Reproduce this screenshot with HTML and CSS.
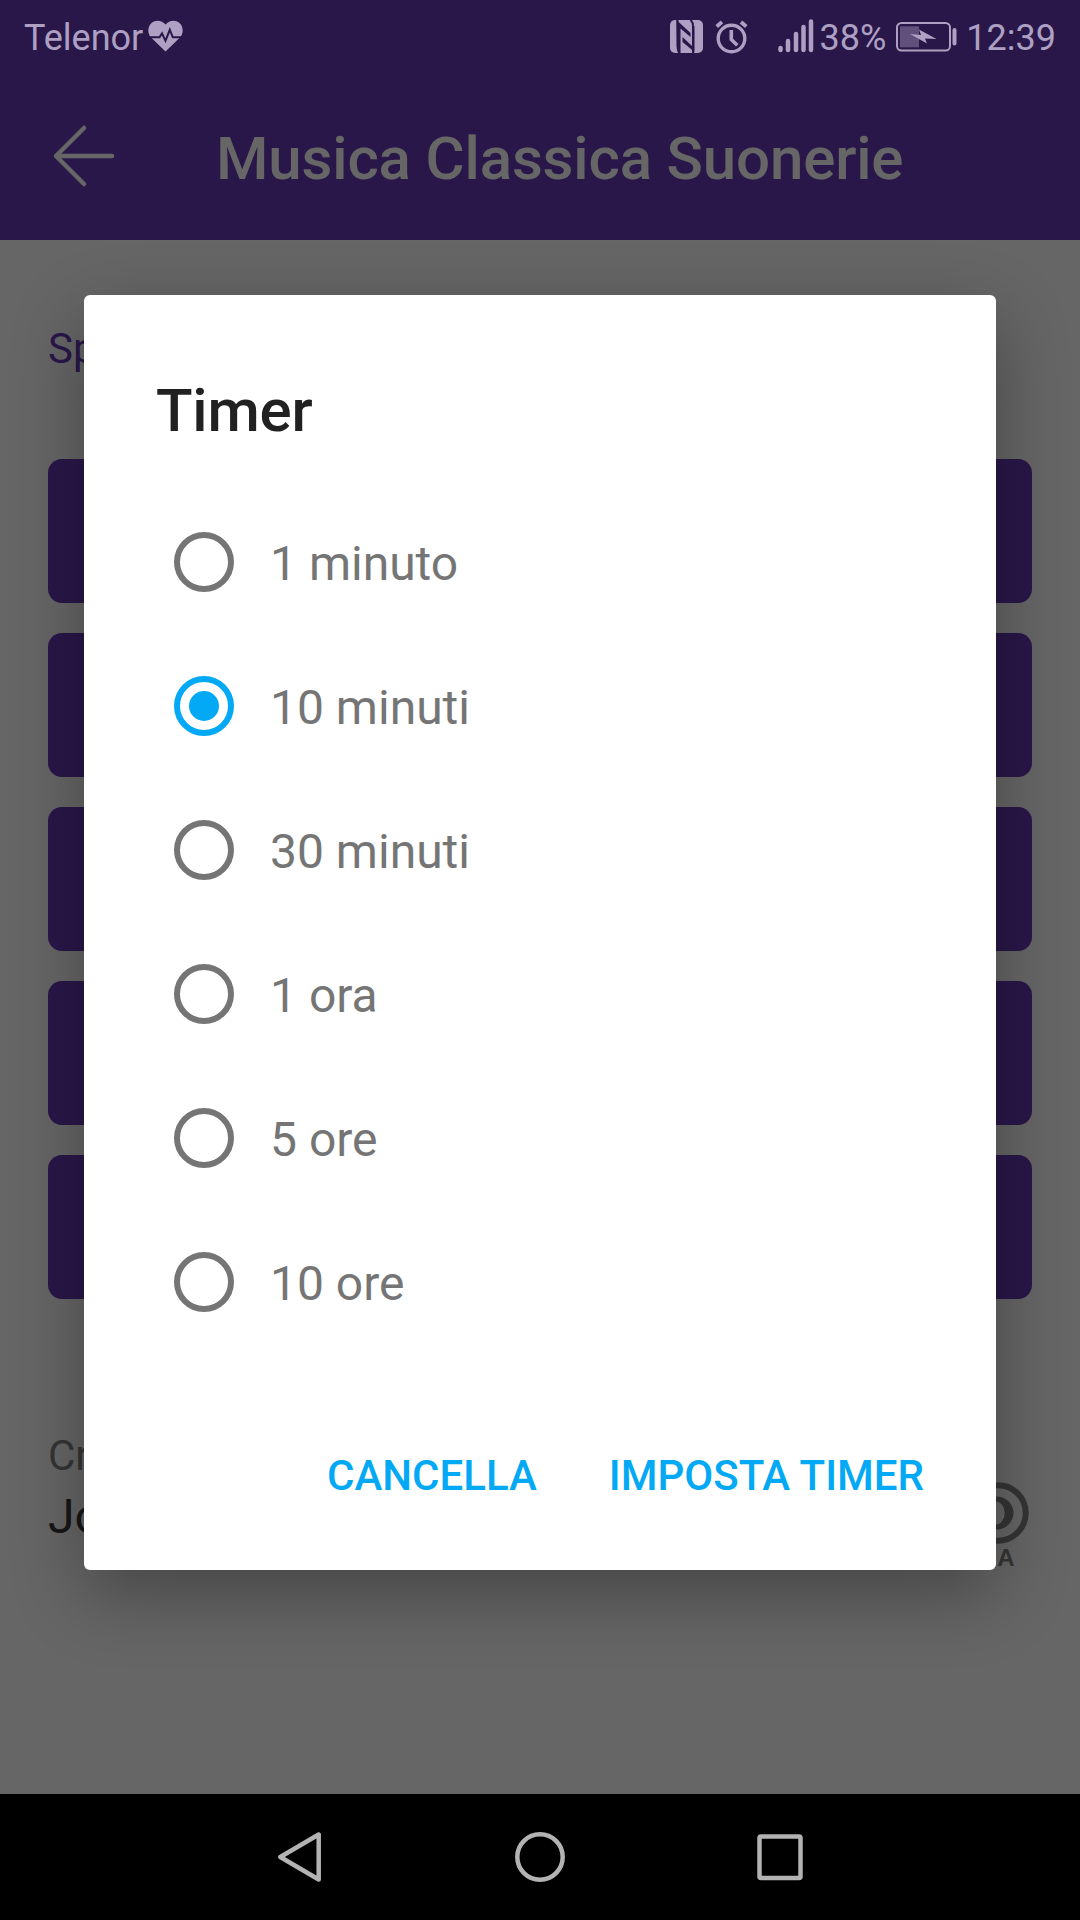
FILE: index.html
```html
<!DOCTYPE html>
<html lang="it">
<head>
<meta charset="utf-8">
<title>Musica Classica Suonerie</title>
<link rel="stylesheet" href="styles.css">
</head>
<body>
<div class="screen">
  <div class="app">
    <header class="app-bar">
      <svg class="back" width="64" height="64" viewBox="0 0 64 64"><path d="M32 4 4 32l28 28M4 32h56"/></svg>
      <h1 class="app-title">Musica Classica Suonerie</h1>
    </header>
    <main class="content">
      <p class="lead">Sp</p>
      <div class="actions">
        <div class="action"></div>
        <div class="action"></div>
        <div class="action"></div>
        <div class="action"></div>
        <div class="action"></div>
      </div>
      <footer class="credits">
        <div>
          <p class="credit-label">Cr</p>
          <p class="credit-name">Jo</p>
        </div>
        <div class="license">
          <svg width="62" height="62" viewBox="0 0 62 62">
            <circle class="ring" cx="31" cy="31" r="27.700"/>
            <path class="letter" d="M29.500 14.500a17 16.500 0 0 1 0 33 17 16.500 0 0 1 0-33Zm-1 5a9.300 11.500 0 0 0 0 23 9.300 11.500 0 0 0 0-23Z"/>
          </svg>
          <span class="license-text">SA</span>
        </div>
      </footer>
    </main>
  </div>

  <div class="scrim">
    <section class="dialog">
      <h2 class="dialog-title">Timer</h2>
      <ul class="options">
        <li class="option"><span class="radio"></span><span class="option-text">1 minuto</span></li>
        <li class="option"><span class="radio radio-on"></span><span class="option-text">10 minuti</span></li>
        <li class="option"><span class="radio"></span><span class="option-text">30 minuti</span></li>
        <li class="option"><span class="radio"></span><span class="option-text">1 ora</span></li>
        <li class="option"><span class="radio"></span><span class="option-text">5 ore</span></li>
        <li class="option"><span class="radio"></span><span class="option-text">10 ore</span></li>
      </ul>
      <div class="buttons"><span>CANCELLA</span><span>IMPOSTA TIMER</span></div>
    </section>
  </div>

  <div class="status">
    <span class="status-text">Telenor</span>
    <svg class="heart" width="35" height="32" viewBox="0 0 35 32">
      <path class="fill" d="M17.500 31.500 2.500 17C-1 12.500 0 6 3.500 3 7.500-.5 14 0 17.500 4.500 21-0 27.500-.5 31.500 3 35 6 36 12.500 32.500 17Z"/>
      <path class="pulse" d="M0 17.300h11.500l2.500-4 3.500 7.500 4.300-11 3 7.500H35"/>
    </svg>
    <svg class="nfc" width="33" height="33" viewBox="0 0 33 33">
      <rect class="fill" width="33" height="33" rx="5"/>
      <path class="cut" d="M7.500 0v26q0 4.500 2 7"/>
      <path class="mark" d="M6.500 0 20.500 13V17L10.500 8.500V33H8L7 26Z"/>
      <path class="cut" d="M20.500 0q2.500 2 2.500 6v27"/>
      <path class="mark" d="M12.500 17 22 26V6h2.500V32L12.500 22Z"/>
    </svg>
    <svg class="alarm" width="33" height="34" viewBox="0 0 33 34">
      <circle cx="16.500" cy="18.500" r="13.300" stroke-width="3.400"/>
      <path stroke-width="3.600" d="M16.300 10v9.500l6 5.800"/>
      <path stroke-width="3.800" d="M1.700 6.500 7 2M31.300 6.500 26 2"/>
    </svg>
    <svg class="signal" width="36" height="34" viewBox="0 0 36 34"><path d="M2.500 29v2M10 22v9M18 15v16M25.500 8v23M33 2.500V31"/></svg>
    <span class="status-text">38%</span>
    <svg class="battery" width="62" height="30" viewBox="0 0 62 30">
      <rect class="case" x="1" y="1" width="53" height="27.500" rx="4.500"/>
      <rect class="level" x="4" y="4.300" width="19" height="21"/>
      <path class="fill" d="m14 12 11 1-2-5.500 17.500 9.500-11.500-.5 2 5Z"/>
      <rect class="fill" x="56.500" y="6" width="4" height="17.500" rx="2"/>
    </svg>
    <span class="status-text">12:39</span>
  </div>

  <nav class="nav">
    <svg width="50" height="54" viewBox="0 0 50 54"><path d="M43.700 4.500v45L5.300 27Z"/></svg>
    <svg width="54" height="54" viewBox="0 0 54 54"><circle cx="27" cy="27" r="22.700"/></svg>
    <svg width="50" height="54" viewBox="0 0 50 54"><rect x="4.500" y="6.500" width="41" height="41.500" rx="1.500"/></svg>
  </nav>
</div>
</body>
</html>
```

FILE: styles.css
```css
* {
  box-sizing: border-box;
  margin: 0;
  padding: 0;
}

body {
  font-family: Roboto, sans-serif;
}

.screen {
  position: relative;
  display: flex;
  flex-direction: column;
  width: 1080px;
  height: 1920px;
  overflow: hidden;
}

.app {
  flex: 1;
  background: #fff;
}

.app-bar {
  display: flex;
  align-items: center;
  gap: 100px;
  height: 240px;
  padding: 72px 0 0 52px;
  background: #673ab7;
}

.back {
  fill: none;
  stroke: #fff;
  stroke-width: 4.5;
  stroke-linecap: round;
  stroke-linejoin: round;
}

.app-title {
  padding-top: 5px;
  color: #fff;
  font-size: 60px;
  line-height: 70px;
  font-weight: 500;
  letter-spacing: -0.15px;
}

.content {
  padding: 84px 48px 0;
}

.lead {
  height: 135px;
  color: #673ab7;
  font-size: 42px;
  line-height: 49px;
}

.actions {
  display: grid;
  gap: 30px;
}

.action {
  height: 144px;
  border-radius: 14px;
  background: #673ab7;
}

.credits {
  display: flex;
  justify-content: space-between;
  padding-top: 132px;
}

.credit-label {
  color: #848484;
  font-size: 42px;
  line-height: 50px;
}

.credit-name {
  padding-top: 8px;
  color: #3a3a3a;
  font-size: 48px;
  line-height: 56px;
}

.license {
  display: flex;
  flex-direction: column;
  align-items: center;
  padding: 51px 3px 0 0;
}

.ring {
  fill: none;
  stroke: #848488;
  stroke-width: 6;
}

.letter {
  fill: #848488;
}

.license-text {
  color: #848488;
  font: bold 24px/28px "Liberation Sans", sans-serif;
  letter-spacing: 2px;
}

.scrim {
  position: absolute;
  inset: 0 0 126px;
  padding: 295px 84px 0;
  background: rgba(0, 0, 0, 0.6);
}

.dialog {
  height: 1275px;
  padding: 81px 72px 0;
  border-radius: 6px;
  background: #fff;
  box-shadow: 0 24px 72px rgba(0, 0, 0, 0.32);
}

.dialog-title {
  height: 114px;
  color: #212121;
  font-size: 60px;
  line-height: 70px;
  font-weight: 500;
  letter-spacing: -0.2px;
}

.options {
  list-style: none;
  padding-left: 18px;
}

.option {
  display: flex;
  align-items: center;
  gap: 36px;
  height: 144px;
  color: #757575;
  font-size: 48px;
}

.option-text {
  padding-top: 2px;
}

.radio {
  display: grid;
  place-items: center;
  width: 60px;
  height: 60px;
  border: 6px solid #757575;
  border-radius: 50%;
}

.radio-on {
  border-color: #03a9f4;
}

.radio-on::after {
  content: "";
  width: 30px;
  height: 30px;
  border-radius: 50%;
  background: #03a9f4;
}

.buttons {
  display: flex;
  justify-content: flex-end;
  gap: 72px;
  padding-top: 97px;
  color: #03a9f4;
  font-size: 42px;
  line-height: 49px;
  font-weight: 500;
}

.status {
  position: absolute;
  inset: 0 0 auto;
  display: flex;
  align-items: center;
  height: 72px;
  padding: 0 24px;
  color: #ada0c2;
  font-size: 36px;
}

.status-text {
  padding-top: 3px;
}

.status .fill {
  fill: #ada0c2;
}

.heart {
  margin-left: 5px;
}

.pulse,
.cut {
  fill: none;
  stroke: #291749;
  stroke-width: 2;
}

.mark {
  fill: #291749;
}

.nfc {
  margin: 1px 0 0 auto;
}

.alarm {
  margin: 1px 30px 0 12px;
  fill: none;
  stroke: #ada0c2;
}

.signal {
  margin-right: 6px;
  fill: none;
  stroke: #ada0c2;
  stroke-width: 4.5;
  stroke-linecap: round;
}

.battery {
  margin: 1px 8px 0 10px;
}

.case {
  fill: none;
  stroke: #ada0c2;
  stroke-width: 2;
}

.level {
  fill: #62507c;
}

.nav {
  display: flex;
  align-items: center;
  justify-content: space-between;
  height: 126px;
  padding: 0 275px;
  background: #000;
}

.nav svg {
  fill: none;
  stroke: #b3b3b3;
  stroke-width: 4.5;
  stroke-linejoin: round;
}
```
